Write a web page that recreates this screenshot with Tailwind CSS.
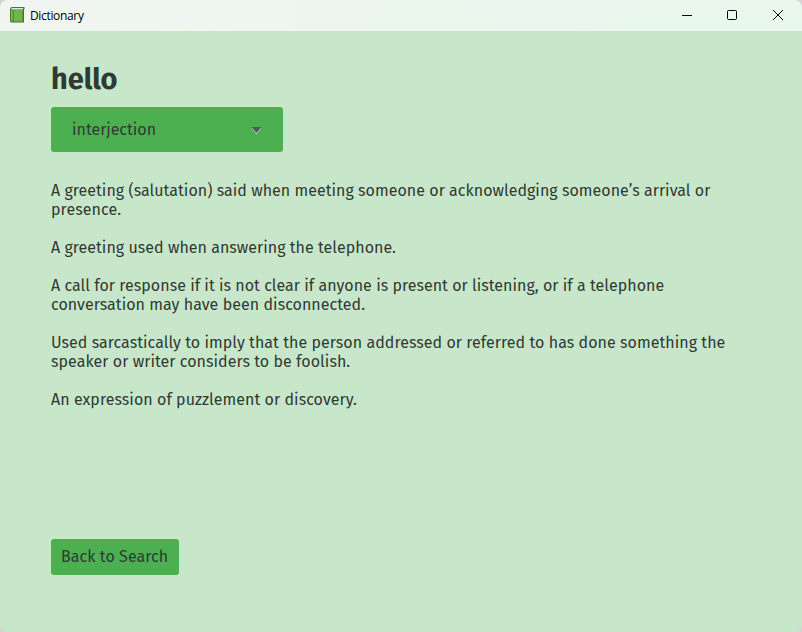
<!DOCTYPE html>
<html lang="en">
<head>
<meta charset="utf-8">
<title>Dictionary</title>
<script src="https://cdn.jsdelivr.net/npm/@tailwindcss/browser@4"></script>
</head>
<body class="h-[632px] w-[802px] overflow-hidden bg-[#d4d4d4] font-['Fira_Sans','Noto_Sans',sans-serif] text-[#303a34]">
<div class="flex h-full flex-col overflow-hidden rounded-lg bg-[#c8e6c9]">
  <header class="flex h-[31px] shrink-0 items-start bg-linear-to-r from-[#f1f5f2] via-[#ebf6ed] to-[#e9f7ed] pl-[9px] text-black">
    <svg class="mt-[7px] h-4 w-4" viewBox="0 0 16 16"><path d="M1 2.5Q1 0 3 0H15.5V2.5H15V15.5H2.5Q1 15.5 1 14Z" fill="#43792b"/><path d="M3 1H14V2.6H2.2Q2.2 1 3 1Z" fill="#dfe9d8"/><path d="M4.6 3H13.5V14.5H4.6Z" fill="#72b34c"/><path d="M2 3H3.6V14.5H2Z" fill="#7fbb59"/></svg>
    <span class="mt-2 ml-[5px] font-['Open_Sans',sans-serif] text-[12px] leading-4 tracking-[-0.34px]">Dictionary</span>
    <div class="ml-auto flex">
      <svg class="h-[30px] w-[46px]" viewBox="0 0 46 30"><path d="M18 15.5H28" stroke="#000"/></svg>
      <svg class="h-[30px] w-[46px]" viewBox="0 0 46 30"><rect x="17.5" y="10.5" width="9" height="9" rx="1" fill="none" stroke="#000"/></svg>
      <svg class="h-[30px] w-[46px]" viewBox="0 0 46 30"><path d="M17 10L27 20M27 10L17 20" stroke="#000"/></svg>
    </div>
  </header>
  <main class="flex flex-1 flex-col items-start px-[51px] pt-[30px]">
    <h1 class="h-[46px] text-[29px] leading-[38px] font-bold tracking-[-0.05px]">hello</h1>
    <button class="flex h-[45px] w-[232px] items-center justify-between rounded-[3px] bg-[#4caf50] pr-[21px] pl-[21px] text-[16px]"><span>interjection</span>
      <svg class="mt-0.5 h-2 w-[11px]" viewBox="0 0 11 8"><path d="M.5 1H10.5L5.5 7.5Z" fill="#b5cdb5"/><path d="M.5 0H10.5L5.5 6Z" fill="#565a57"/></svg>
    </button>
    <div class="mt-[29px] flex h-[358px] flex-col items-start gap-[19px] text-[16px] leading-[19px] tracking-[0.03px] whitespace-nowrap">
      <p>A greeting (salutation) said when meeting someone or acknowledging someone’s arrival or<br><span class="tracking-[0.1px]">presence.</span></p>
      <p>A greeting used when answering the telephone.</p>
      <p>A call for response if it is not clear if anyone is present or listening, or if a telephone<br><span class="tracking-[0.05px]">conversation may have been disconnected.</span></p>
      <p><span class="tracking-[0.045px]">Used sarcastically to imply that the person addressed or referred to has done something the</span><br><span class="tracking-[0.045px]">speaker or writer considers to be foolish.</span></p>
      <p class="tracking-[0.05px]">An expression of puzzlement or discovery.</p>
    </div>
    <button class="flex h-9 w-32 items-center justify-start rounded-[3px] bg-[#4caf50] pl-2.5 text-[16px] tracking-[0.06px] whitespace-nowrap">Back to Search</button>
  </main>
</div>
</body>
</html>
